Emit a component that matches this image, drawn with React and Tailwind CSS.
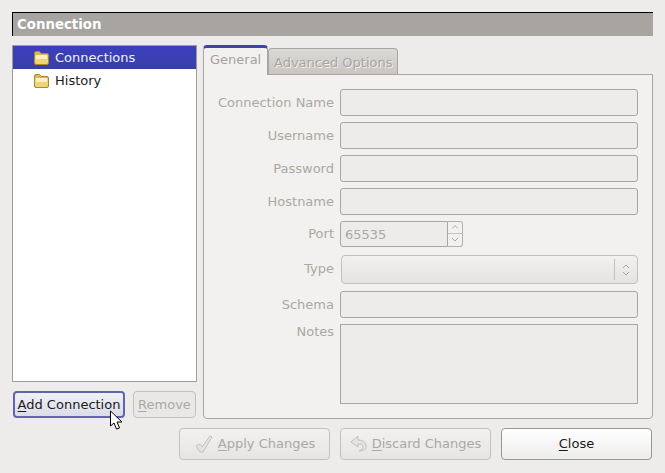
import React from 'react';

const labelClass = 'w-[130px] shrink-0 text-right text-[#aca8a2]';

const Folder = () => (
  <svg width="17" height="16" viewBox="0 0 17 16" className="shrink-0">
    <path d="M1.5 3 Q1.5 1.5 3 1.5 L6.5 1.5 L8 3.5 L14 3.5 Q15.5 3.5 15.5 5 L15.5 13 Q15.5 14.5 14 14.5 L3 14.5 Q1.5 14.5 1.5 13 Z" fill="#d9b95c" stroke="#a98a30" />
    <path d="M2.5 6 Q2.5 5 3.5 5 L13.5 5 Q14.5 5 14.5 6 L14.5 12.5 Q14.5 13.5 13.5 13.5 L3.5 13.5 Q2.5 13.5 2.5 12.5 Z" fill="#fbf0c0" />
    <path d="M2.5 9 L14.5 9 L14.5 12.5 Q14.5 13.5 13.5 13.5 L3.5 13.5 Q2.5 13.5 2.5 12.5 Z" fill="#f3d271" />
  </svg>
);

const Row = ({ label, children, className = '', labelTop = 'pt-[6px]' }) => (
  <div className={`flex ${className}`}>
    <div className={`${labelClass} mr-[6px] ${labelTop}`}>{label}</div>
    {children}
  </div>
);

const Input = () => (
  <div className="h-[27px] w-[298px] rounded-[3px] border border-[#a9a6a1] bg-[#edeceb]" />
);

const Action = ({ icon, children }) => (
  <button type="button" className="flex h-[32px] w-[151px] items-center justify-center gap-[4px] rounded-[4px] border border-[#c4c1bc] bg-gradient-to-b from-[#f2f1f0] to-[#e6e5e3] text-[#aca8a2]">
    {icon}
    <span>{children}</span>
  </button>
);

export default function App() {
  return (
    <div className="relative h-[473px] w-[665px] overflow-hidden bg-[#edeceb] px-[12px] pt-[12px] font-['DejaVu_Sans',sans-serif] text-[13px] leading-[16px]">
      <div className="flex h-[24px] w-[641px] items-center border-t border-l border-black bg-[#a8a49f] pl-[4px] text-[13.33px] font-bold text-white">
        Connection
      </div>

      <div className="mt-[9px] flex">
        <div className="w-[185px] shrink-0">
          <div className="h-[337px] border border-[#a09d98] bg-white">
            <div className="flex h-[23px] items-center gap-[5px] bg-gradient-to-b from-[#3a3fbd] to-[#3a3fa6] pl-[20px] text-[#f0f0f8]">
              <Folder />
              <span>Connections</span>
            </div>
            <div className="flex h-[23px] items-center gap-[5px] pl-[20px] text-[#1a1a1a]">
              <Folder />
              <span>History</span>
            </div>
          </div>
          <div className="mt-[9px] flex pl-[1px]">
            <button type="button" className="h-[27px] w-[112px] rounded-[4px] border-2 border-[#6264b0] bg-gradient-to-b from-[#f0f0f6] to-[#dcdce8] text-[#1a1a1a]">
              <span className="underline underline-offset-2">A</span>dd Connection
            </button>
            <button type="button" className="ml-[8px] h-[27px] w-[63px] rounded-[4px] border border-[#c4c1bc] bg-[#e9e8e6] text-[#aca8a2]">
              <span className="underline underline-offset-2">R</span>emove
            </button>
          </div>
        </div>

        <div className="ml-[6px] w-[450px]">
          <div className="flex h-[29px] items-end">
            <div className="relative z-10 -mb-px h-[30px] w-[65px] rounded-t-[4px] border-x border-[#a9a6a1] border-t-[3px] border-t-[#3f44ad] bg-[#f2f1f0] pt-[4px] pl-[6px] text-[#a5a19b]">
              General
            </div>
            <div className="h-[26px] w-[130px] rounded-t-[4px] border-x border-t border-[#a9a6a1] bg-gradient-to-b from-[#dbd9d6] to-[#c9c6c2] pt-[6px] pl-[5px] text-[#aaa6a0] [text-shadow:1px_1px_0_#eeeeee]">
              Advanced Options
            </div>
          </div>
          <div className="h-[345px] rounded-b-[4px] border border-[#a9a6a1] bg-[#f2f1f0] pt-[14px]">
            <Row label="Connection Name"><Input /></Row>
            <Row label="Username" className="mt-[6px]"><Input /></Row>
            <Row label="Password" className="mt-[6px]"><Input /></Row>
            <Row label="Hostname" className="mt-[6px]"><Input /></Row>
            <Row label="Port" className="mt-[6px]" labelTop="pt-[5px]">
              <div className="flex h-[26px] w-[108px] items-center rounded-l-[3px] border border-[#a9a6a1] bg-[#edeceb] pt-[2px] pl-[4px] text-[#aca8a2]">65535</div>
              <div className="flex h-[26px] w-[15px] flex-col rounded-r-[3px] border border-l-0 border-[#b5b2ad]">
                <svg width="14" height="12" viewBox="0 0 14 12" className="border-b border-[#c4c1bc]"><path d="M4 7 L7 4 L10 7" fill="none" stroke="#a9a6a1" /></svg>
                <svg width="14" height="12" viewBox="0 0 14 12"><path d="M4 4 L7 7 L10 4" fill="none" stroke="#a9a6a1" /></svg>
              </div>
            </Row>
            <Row label="Type" className="mt-[8px]">
              <div className="ml-px flex h-[29px] w-[297px] items-center justify-end rounded-[4px] border border-[#c4c1bc] bg-gradient-to-b from-[#f2f1f0] to-[#e4e3e1]">
                <div className="h-[21px] w-px bg-[#c4c1bc]" />
                <svg width="22" height="18" viewBox="0 0 22 18"><path d="M8 7 L11 4 L14 7 M8 11 L11 14 L14 11" fill="none" stroke="#a9a6a1" /></svg>
              </div>
            </Row>
            <Row label="Schema" className="mt-[7px]"><Input /></Row>
            <Row label="Notes" className="mt-[6px]" labelTop="pt-0">
              <div className="h-[80px] w-[298px] border border-[#a9a6a1] bg-[#edeceb]" />
            </Row>
          </div>
        </div>
      </div>

      <div className="mt-[9px] flex w-[640px] justify-end gap-[10px]">
        <Action icon={<svg width="20" height="20" viewBox="0 0 20 20"><path d="M2 12 L6 10 L8 13 L16 2 L18 3 L9 18 L6 18 Z" fill="#e4e3e1" stroke="#c4c1bc" /></svg>}>
          <span className="underline underline-offset-2">A</span>pply Changes
        </Action>
        <Action icon={<svg width="18" height="20" viewBox="0 0 18 20"><path d="M8 2 L1 8 L8 13 L8 10 Q13 10 13 13 Q13 16 9 17 Q17 17 16 11 Q15 6 8 6 Z" fill="#e4e3e1" stroke="#c4c1bc" /></svg>}>
          <span className="underline underline-offset-2">D</span>iscard Changes
        </Action>
        <button type="button" className="h-[32px] w-[151px] rounded-[4px] border border-[#9a9792] bg-gradient-to-b from-white to-[#eeedec] text-[#1a1a1a]">
          <span className="underline underline-offset-2">C</span>lose
        </button>
      </div>

      <svg width="16" height="22" viewBox="0 0 16 22" className="absolute top-[410px] left-[109px]">
        <path d="M1.5 1 L1.5 16 L5 13 L7.5 19 L10.5 18 L8 12 L13 12 Z" fill="white" stroke="black" strokeLinejoin="round" />
      </svg>
    </div>
  );
}
